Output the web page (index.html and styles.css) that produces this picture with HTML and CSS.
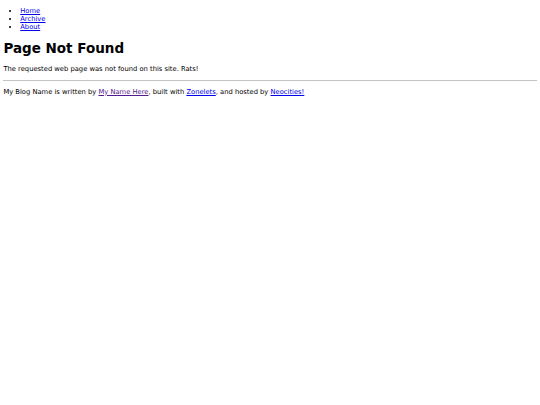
FILE: index.html
```html
<!DOCTYPE html>
<html>
<head>
<meta charset="utf-8">
<title>Page Not Found</title>
<link rel="stylesheet" href="styles.css">
</head>
<body>
<ul class="nav">
<li><a href="#">Home</a></li>
<li><a href="#">Archive</a></li>
<li><a href="#">About</a></li>
</ul>
<h1 class="title">Page Not Found</h1>
<p class="text">The requested web page was not found on this site. Rats!</p>
<hr class="rule">
<p class="text">My Blog Name is written by <a class="visited" href="#">My Name Here</a>, built with <a href="#">Zonelets</a>, and hosted by <a href="#">Neocities!</a></p>
</body>
</html>
```
FILE: styles.css
```css
html { background: #fff; }
body {
  margin: 0 3.375px 3.375px;
  font-family: "DejaVu Sans", sans-serif;
  font-size: 6.75px;
  color: #000;
}
a { color: #0000ee; }
a.visited { color: #551a8b; }
.nav {
  margin: 7px 0 6.75px;
  padding-left: 16.875px;
}
.title {
  font-size: 13.5px;
  margin: 9.045px 0;
}
.text { margin: 6.75px 0; }
.rule {
  margin: 3.375px 0;
  border: 0;
  border-top: 1px solid #c4c4c4;
  height: 0;
}
```
